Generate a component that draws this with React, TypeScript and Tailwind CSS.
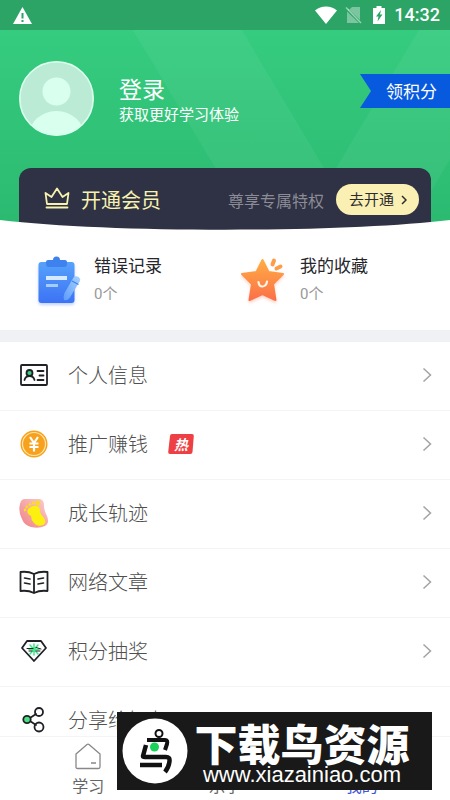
import type { ReactNode } from "react";

function StatusBar() {
  return (
    <div className="relative flex h-[30px] items-center bg-[#2ba466] pr-[10px] pl-[13px] text-white">
      <svg width="19" height="17" viewBox="0 0 19 17" aria-hidden="true">
        <path d="M9.500 0L19 17H0Z" fill="#fff" />
        <path d="M8.500 6h2v5.500h-2zM8.500 13h2v2h-2z" fill="#2ba466" />
      </svg>
      <div className="ml-auto flex items-center">
        <svg width="22" height="18" viewBox="0 0 22 18" aria-hidden="true">
          <path d="M0 4.500C6-1 16-1 22 4.500L11 18Z" fill="#fff" />
        </svg>
        <svg className="ml-2" width="17" height="18" viewBox="0 0 17 18" aria-hidden="true">
          <path d="M7 1h8v13L3 2.500V5L7 1ZM2 5.500L14 17H2Z" fill="#fff" opacity=".38" />
          <path d="M1 1.500L16 17" stroke="#fff" strokeWidth="1.500" opacity=".5" />
        </svg>
        <svg className="ml-[11px]" width="12" height="18" viewBox="0 0 12 18" aria-hidden="true">
          <path d="M3.500 0h5v2H12v16H0V2h3.500Z" fill="#fff" />
          <path d="M8 4L3 10.500h2.500L4.500 15.500L9.500 8.500H7Z" fill="#2ba466" />
        </svg>
        <span className="ml-[9px] font-[Roboto,sans-serif] text-[18px] leading-[30px] font-medium">14:32</span>
      </div>
    </div>
  );
}

function Avatar() {
  return (
    <svg width="75" height="75" viewBox="0 0 75 75" role="img" aria-label="头像">
      <defs>
        <clipPath id="avatar-clip">
          <circle cx="37.500" cy="37.500" r="36.500" />
        </clipPath>
      </defs>
      <circle cx="37.500" cy="37.500" r="37" fill="#bcebd5" />
      <g fill="#d9ffee" clipPath="url(#avatar-clip)">
        <circle cx="37.500" cy="30.500" r="14" />
        <ellipse cx="37.500" cy="76" rx="28" ry="26" />
      </g>
      <circle cx="37.500" cy="37.500" r="36.700" fill="none" stroke="#d9ffee" strokeWidth="1.600" />
    </svg>
  );
}

function Header() {
  return (
    <header className="relative overflow-hidden bg-linear-to-b from-[#37cf82] to-[#2bb970]">
      <svg
        className="absolute top-0 left-0 h-full w-full"
        viewBox="0 0 450 231"
        preserveAspectRatio="none"
        aria-hidden="true"
      >
        <path d="M115 0H224L330 178L437 0H546L407 231H253Z" fill="#fff" opacity=".05" />
      </svg>
      <StatusBar />
      <div className="relative flex items-start pt-[31px] pl-[19px]">
        <Avatar />
        <button type="button" className="mt-[13px] ml-[25px] text-left text-white">
          <span className="block text-[23px] leading-[28px]">登录</span>
          <span className="block text-[15px] leading-[24px]">获取更好学习体验</span>
        </button>
        <button
          type="button"
          className="mt-[13px] ml-auto h-[34px] bg-[#075ade] pr-[13px] pl-[26px] text-[17px] leading-[34px] text-white [clip-path:polygon(0_0,100%_0,100%_100%,0_100%,11px_50%)]"
        >
          领积分
        </button>
      </div>
      <div className="relative mx-[19px] mt-8 flex h-[63px] items-center rounded-t-xl bg-[#2f3144] pr-3 pl-[25px]">
        <svg width="26" height="26" viewBox="0 0 26 26" fill="none" stroke="#f7f2ae" strokeWidth="1.800" aria-hidden="true">
          <path d="M1.500 6L7.500 10L13 1.500L18.500 10L24.500 6L23 17H3Z" strokeLinejoin="round" />
          <path d="M2.500 20.500h21" strokeLinecap="round" />
        </svg>
        <span className="ml-[11px] text-[20px] text-[#f7f2ae]">开通会员</span>
        <span className="ml-auto text-[16px] text-[#8b8c95]">尊享专属特权</span>
        <button
          type="button"
          className="ml-3 flex h-[31px] items-center gap-[7px] rounded-full bg-[#fbf0b3] pr-3 pl-[13px] text-[15px] text-[#2c2c30]"
        >
          去开通
          <svg width="6" height="10" viewBox="0 0 6 10" fill="none" stroke="#2c2c30" strokeWidth="1.500" aria-hidden="true">
            <path d="M1 1L5 5L1 9" />
          </svg>
        </button>
      </div>
      <svg
        className="absolute bottom-0 left-0 h-[11px] w-full"
        viewBox="0 0 450 11"
        preserveAspectRatio="none"
        aria-hidden="true"
      >
        <path d="M0 0C110 13 340 13 450 0V11H0Z" fill="#fff" />
      </svg>
    </header>
  );
}

function ClipboardIcon() {
  return (
    <svg width="50" height="54" viewBox="0 0 50 54" aria-hidden="true">
      <defs>
        <linearGradient id="clip-a" x1="0" y1="0" x2="0" y2="1">
          <stop offset="0" stopColor="#56a2fb" />
          <stop offset="1" stopColor="#3d72f4" />
        </linearGradient>
        <linearGradient id="clip-b" x1="1" y1="0" x2="0" y2="1">
          <stop offset="0" stopColor="#a9d3ff" />
          <stop offset="1" stopColor="#5d9cfb" />
        </linearGradient>
        <filter id="clip-s" x="-20%" y="-20%" width="140%" height="150%">
          <feDropShadow dx="0" dy="2" stdDeviation="1.500" floodColor="#4b86f7" floodOpacity=".35" />
        </filter>
      </defs>
      <rect x="4.500" y="9" width="36" height="41" rx="3" fill="url(#clip-a)" filter="url(#clip-s)" />
      <path d="M14 7h5a3.500 3.500 0 0 1 7 0h5q2 0 2 2v2q0 3-3 3H15q-3 0-3-3V9q0-2 2-2Z" fill="#3d82ee" />
      <rect x="12" y="23" width="21" height="4" fill="#d6e9ff" />
      <rect x="12" y="31" width="12" height="3" fill="#a5ccff" />
      <path d="M39.500 24.500Q41 22.500 43.500 23.500Q47 25 46 28L35.500 45Q33 48 30 47Q29 44 30.500 40Z" fill="url(#clip-b)" />
      <path d="M38 28L44.500 31.500" stroke="#4283f2" strokeWidth="1.300" />
    </svg>
  );
}

function StarIcon() {
  return (
    <svg width="50" height="54" viewBox="0 0 50 54" aria-hidden="true">
      <defs>
        <linearGradient id="star-a" x1="0" y1="0" x2="0" y2="1">
          <stop offset="0" stopColor="#ffad43" />
          <stop offset="1" stopColor="#fb7048" />
        </linearGradient>
        <filter id="star-s" x="-20%" y="-20%" width="140%" height="150%">
          <feDropShadow dx="0" dy="2" stdDeviation="1.500" floodColor="#fb7048" floodOpacity=".3" />
        </filter>
      </defs>
      <path
        d="M22.500 7L28.500 19L43 21L33 31L35.500 47L22.500 41L9.500 47L12 31L2 21L16.500 19Z"
        fill="url(#star-a)"
        stroke="url(#star-a)"
        strokeWidth="2"
        strokeLinejoin="round"
        filter="url(#star-s)"
      />
      <path d="M18.500 29Q18.800 33.500 22.500 33.500Q26.500 33 27 28.500" fill="none" stroke="#fff4e8" strokeWidth="2.200" strokeLinecap="round" />
      <path d="M34 7.500L32.500 11.500M40.500 13.500L36.500 15.500" stroke="#ff9c47" strokeWidth="4" strokeLinecap="round" />
    </svg>
  );
}

function Stat({ icon, title, count }: { icon: ReactNode; title: string; count: string }) {
  return (
    <a href="#" className="flex items-center gap-[10px] pl-[15px]">
      {icon}
      <span>
        <span className="block text-[17px] leading-[28px] text-[#26262b]">{title}</span>
        <span className="block font-[Roboto,'Noto_Sans_CJK_SC',sans-serif] text-[15px] leading-[30px] text-[#999]">{count}</span>
      </span>
    </a>
  );
}

const line = { fill: "none", stroke: "#1f2126", strokeWidth: 1.8, strokeLinecap: "round", strokeLinejoin: "round" } as const;

function IdIcon() {
  return (
    <svg width="30" height="30" viewBox="0 0 30 30" {...line} aria-hidden="true">
      <rect x="2" y="5" width="26" height="20" rx="1" />
      <circle cx="10.500" cy="13" r="3" fill="#35cf7d" />
      <path d="M5.500 20Q6.500 16 10.500 16Q14.500 16 15.500 20M18.500 11H24.500M20.500 15.500H24.500M18.500 20H24.500" />
    </svg>
  );
}

function CoinIcon() {
  return (
    <svg width="30" height="30" viewBox="0 0 30 30" fill="none" aria-hidden="true">
      <circle cx="15" cy="15" r="13.500" fill="#f7a11c" />
      <circle cx="15" cy="15" r="11.500" stroke="#ffe6b0" strokeWidth="1.200" />
      <path d="M11 8L15 14L19 8M15 14V22.500M10.500 14.500H19.500M10.500 18H19.500" stroke="#fff" strokeWidth="2.200" />
    </svg>
  );
}

function FootIcon() {
  return (
    <svg width="30" height="30" viewBox="0 0 30 30" aria-hidden="true">
      <defs>
        <linearGradient id="foot-a" x1="1" y1="0" x2="0" y2="1">
          <stop offset="0" stopColor="#fbd0ce" />
          <stop offset="1" stopColor="#ef7f84" />
        </linearGradient>
      </defs>
      <path d="M6 1H21Q25 2 25 7Q25 13 28 18Q31 25 26 28Q20 31 12 29Q5 27 3 21Q-1 14 1 6Q2 1 6 1Z" fill="url(#foot-a)" />
      <path d="M9 11Q13 7 18 8Q22 10 21 14Q22 17 25 20Q28 25 24 27Q18 29 15 25Q12 22 12 18Q7 16 9 11Z" fill="#fbf00f" />
      <g fill="#f8dd26">
        <ellipse cx="18.800" cy="5.200" rx="2.300" ry="2.600" />
        <ellipse cx="14.300" cy="5" rx="1.400" ry="1.800" />
        <ellipse cx="10.800" cy="6.500" rx="1.300" ry="1.600" />
        <ellipse cx="7.800" cy="8.800" rx="1.200" ry="1.500" />
        <ellipse cx="6" cy="12" rx="1.200" ry="1.400" />
      </g>
    </svg>
  );
}

function BookIcon() {
  return (
    <svg width="30" height="30" viewBox="0 0 30 30" {...line} aria-hidden="true">
      <path d="M15 7Q9 4 1.500 5V24Q9 23 15 26Q21 23 28.500 24V5Q21 4 15 7ZM15 7V26" />
      <path d="M5.500 11L11 12M5.500 16L11 17M19 12L24.500 11M19 17L24.500 16" strokeWidth="1.600" />
    </svg>
  );
}

function GemIcon() {
  return (
    <svg width="30" height="30" viewBox="0 0 30 30" {...line} aria-hidden="true">
      <path d="M8 5H22L27 12L15 25L3 12Z" />
      <path d="M15 8V19M11 9L19 18M19 9L11 18M10 13.500H20" stroke="#43e58a" strokeWidth="1.500" />
      <path d="M8 12.500H14M17 11.500L22 13M10 15H13M17 15H21" strokeWidth="1" />
    </svg>
  );
}

function ShareIcon() {
  return (
    <svg width="30" height="30" viewBox="0 0 30 30" {...line} aria-hidden="true">
      <path d="M11 13L17 9M11 16L17 20" />
      <circle cx="20" cy="7" r="4" />
      <circle cx="20" cy="22" r="4.500" />
      <circle cx="8" cy="14.500" r="3.700" fill="#4be083" />
    </svg>
  );
}

function HotBadge() {
  return (
    <span className="ml-[20px] grid place-items-center">
      <svg className="[grid-area:1/1]" width="26" height="20" viewBox="0 0 26 20" aria-hidden="true">
        <path d="M4 0H24Q26 0 25.800 2L24.500 18Q24.300 20 22.300 20H2Q0 20 .2 18L2 2Q2.200 0 4 0Z" fill="#ee4044" />
      </svg>
      <span className="text-[14px] leading-5 font-bold text-white italic [grid-area:1/1]">热</span>
    </span>
  );
}

const rows = [
  { label: "个人信息", icon: <IdIcon /> },
  { label: "推广赚钱", icon: <CoinIcon />, hot: true },
  { label: "成长轨迹", icon: <FootIcon /> },
  { label: "网络文章", icon: <BookIcon /> },
  { label: "积分抽奖", icon: <GemIcon /> },
  { label: "分享给好友", icon: <ShareIcon /> },
];

function Menu() {
  return (
    <ul>
      {rows.map((row) => (
        <li key={row.label} className="border-b border-[#f3f5f5]">
          <a href="#" className="flex h-[68px] items-center pr-[18px] pb-[2px] pl-[19px] text-[20px] font-light text-[#505050]">
            {row.icon}
            <span className="ml-[19px]">{row.label}</span>
            {row.hot && <HotBadge />}
            <svg className="ml-auto" width="10" height="16" viewBox="0 0 10 16" fill="none" stroke="#a3a3a3" strokeWidth="1.500" aria-hidden="true">
              <path d="M1.500 1.500L8.500 8L1.500 14.500" />
            </svg>
          </a>
        </li>
      ))}
    </ul>
  );
}

function TabBar() {
  return (
    <nav className="grid h-[64px] shrink-0 grid-cols-3 border-t border-[#f3f4f4] bg-white px-5 text-[16px] leading-[24px] text-[#666]">
      <a href="#" className="flex flex-col items-center pt-[6px]">
        <svg width="28" height="27" viewBox="0 0 28 27" fill="none" stroke="#888" strokeWidth="1.300" strokeLinejoin="round" aria-hidden="true">
          <path d="M2 11L13 1.500Q14 .8 15 1.500L26 11V24Q26 25.500 24.500 25.500H3.500Q2 25.500 2 24ZM17 20H22" />
        </svg>
        <span className="mt-[3px]">学习</span>
      </a>
      <a href="#" className="flex flex-col items-center pt-[36px]">
        乐学
      </a>
      <a href="#" className="flex flex-col items-center pt-[36px] text-[#4257d6]">
        我的
      </a>
    </nav>
  );
}

function Watermark() {
  return (
    <div className="absolute right-[18px] bottom-[10px] flex h-[78px] w-[315px] items-center bg-[#191919] pr-4 pl-[5px] text-white">
      <svg className="shrink-0" width="66" height="66" viewBox="0 0 66 66" aria-hidden="true">
        <circle cx="33" cy="33" r="32.500" fill="#fff" />
        <g fill="none" stroke="#111" strokeLinejoin="round">
          <circle cx="37" cy="15.500" r="3.500" strokeWidth="2" />
          <path d="M25 22H43Q46 22 45 26L43 32" strokeWidth="4" />
          <path d="M24 27L21 38Q21 39 23 39H44Q48 39 47.500 43Q47 49 43 54" strokeWidth="4.500" />
          <path d="M18 47H40" strokeWidth="4.500" />
        </g>
        <circle cx="32.500" cy="29" r="4.500" fill="#19d35a" />
      </svg>
      <div className="flex-1 pt-1 whitespace-nowrap">
        <div className="text-center text-[43px] leading-[44px] font-black">下载鸟资源</div>
        <div className="text-center font-['Liberation_Sans',sans-serif] text-[22px] leading-[22px]">www.xiazainiao.com</div>
      </div>
    </div>
  );
}

export default function App() {
  return (
    <div className="relative flex h-screen flex-col overflow-hidden bg-white font-['Noto_Sans_CJK_SC',sans-serif]">
      <main className="min-h-0 flex-1 overflow-y-auto [scrollbar-width:none]">
        <Header />
        <section className="grid h-[99px] grid-cols-2 px-[19px] pb-[2px]">
          <Stat icon={<ClipboardIcon />} title="错误记录" count="0个" />
          <Stat icon={<StarIcon />} title="我的收藏" count="0个" />
        </section>
        <div className="h-3 bg-[#f0f1f5]" />
        <Menu />
      </main>
      <TabBar />
      <Watermark />
    </div>
  );
}
